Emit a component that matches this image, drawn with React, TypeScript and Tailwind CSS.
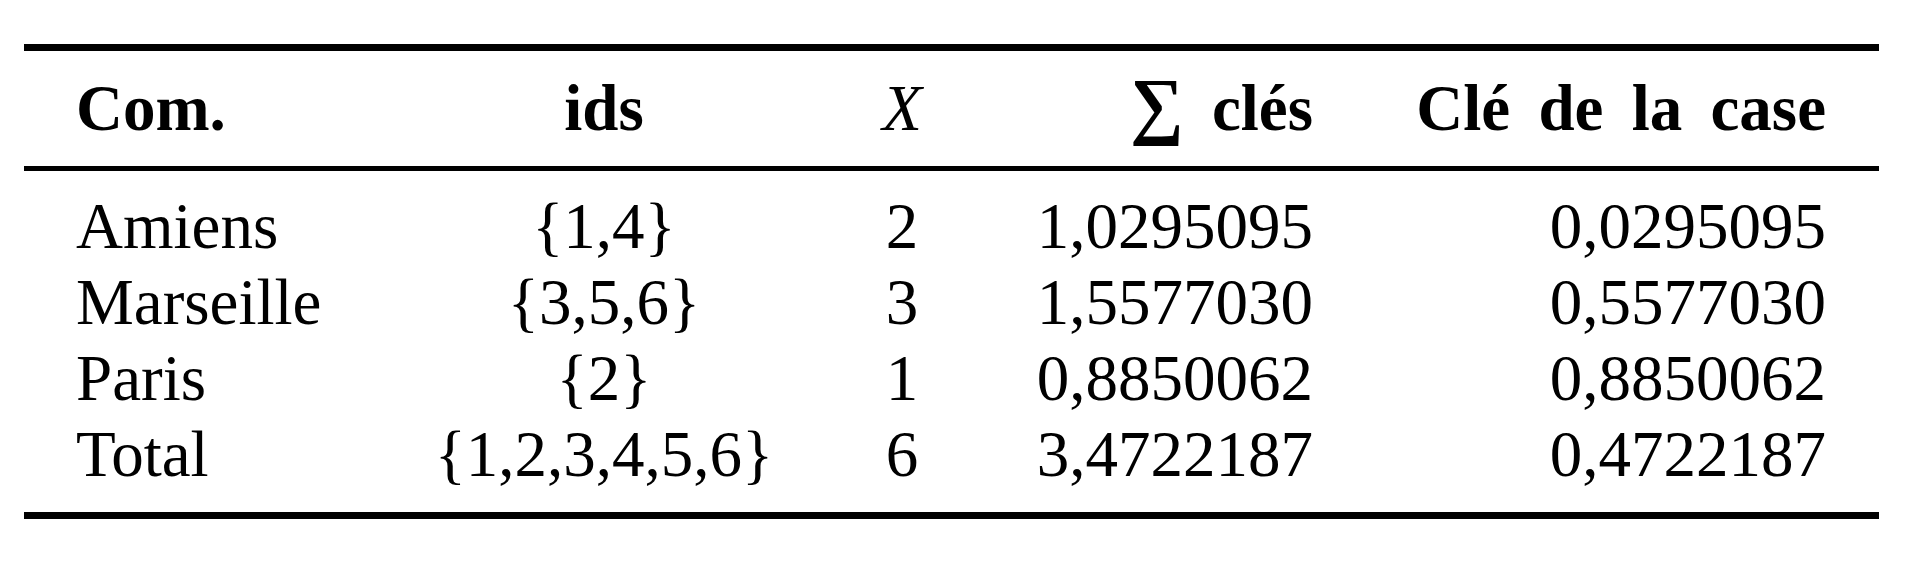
const rows = [
  { com: 'Amiens', ids: '{1,4}', x: '2', sum: '1,0295095', key: '0,0295095' },
  { com: 'Marseille', ids: '{3,5,6}', x: '3', sum: '1,5577030', key: '0,5577030' },
  { com: 'Paris', ids: '{2}', x: '1', sum: '0,8850062', key: '0,8850062' },
  { com: 'Total', ids: '{1,2,3,4,5,6}', x: '6', sum: '3,4722187', key: '0,4722187' },
];

const cols = 'grid grid-cols-[356px_448px_148px_389px_514px]';

export default function App() {
  return (
    <div className="w-[1924px] h-[572px] bg-white text-black font-['Liberation_Serif',serif] text-[65px] leading-[76px]">
      <div className="ml-[24px] w-[1855px] pt-[44px]">
        {/* top rule */}
        <div className="h-[7px] bg-black" />

        {/* header */}
        <div className={`${cols} h-[115px] pt-[19px] font-bold [word-spacing:12px]`}>
          <div className="pl-[52px]">Com.</div>
          <div className="text-center">ids</div>
          <div className="text-center font-normal italic">X</div>
          <div className="text-right pr-[52px]">
            <span className="text-[75px] leading-[0]">∑</span> clés
          </div>
          <div className="text-right pr-[53px]">Clé de la case</div>
        </div>

        {/* mid rule */}
        <div className="h-[5px] bg-black" />

        {/* body */}
        <div className="pt-[17px] pb-[20px]">
          {rows.map((r) => (
            <div key={r.com} className={cols}>
              <div className="pl-[52px]">{r.com}</div>
              <div className="text-center">{r.ids}</div>
              <div className="text-center">{r.x}</div>
              <div className="text-right pr-[52px]">{r.sum}</div>
              <div className="text-right pr-[53px]">{r.key}</div>
            </div>
          ))}
        </div>

        {/* bottom rule */}
        <div className="h-[7px] bg-black" />
      </div>
    </div>
  );
}
